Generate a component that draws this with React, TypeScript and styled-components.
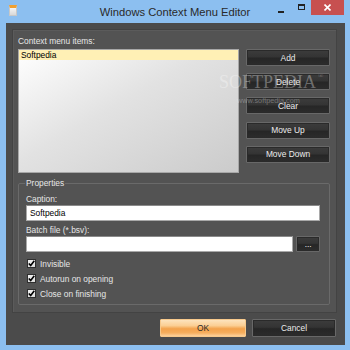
import React from 'react';
import styled, { createGlobalStyle } from 'styled-components';

const Global = createGlobalStyle`
  html, body { margin: 0; padding: 0; background: #8cbff0; }
  body { font-family: 'Liberation Sans', Arial, sans-serif; font-size: 8.4px; }
  * { box-sizing: border-box; }
`;

const Window = styled.div`
  position: relative;
  width: 350px;
  height: 350px;
  background: #8cbff0;
  display: flex;
  flex-direction: column;
  overflow: hidden;
`;

const TitleBar = styled.div`
  height: 23px;
  flex: none;
  display: grid;
  grid-template-columns: 1fr auto 1fr;
  align-items: start;
`;

const AppIcon = styled.div`
  margin: 5px 0 0 9px;
  width: 8px;
  height: 11px;
  background: linear-gradient(#f4f4f4, #d8d8d8);
  border: 1px solid #c8c8c8;
  border-top: 3px solid #f0a030;
`;

const Title = styled.div`
  padding-top: 6px;
  font-size: 11.2px;
  line-height: 13px;
  color: #2a2a2a;
  white-space: nowrap;
`;

const Controls = styled.div`
  justify-self: end;
  display: flex;
  margin-right: 6px;
`;

const CtrlButton = styled.div<{ $close?: boolean }>`
  width: ${(p) => (p.$close ? 33 : 20)}px;
  height: 15px;
  background: ${(p) => (p.$close ? '#c75050' : 'transparent')};
  display: flex;
  align-items: center;
  justify-content: center;
  color: #fff;
`;

const MinGlyph = styled.div`
  width: 6px;
  height: 2px;
  margin-top: 8px;
  background: #222;
`;

const MaxGlyph = styled.div`
  width: 7px;
  height: 6px;
  margin-top: -1px;
  border: 1px solid #222;
  border-top-width: 2px;
`;

const Client = styled.div`
  flex: 1;
  margin: 0 5px 5px 6px;
  background: #4b4b4b;
  padding: 6px 8px 8px 6px;
  display: flex;
  flex-direction: column;
`;

const Panel = styled.div`
  height: 284px;
  flex: none;
  background: #535353;
  border: 1px solid #434343;
  box-shadow: inset 1px 1px 0 #5b5b5b;
  padding: 6px 6px 0 5px;
  display: flex;
  flex-direction: column;
`;

const TopRow = styled.div`
  display: flex;
  gap: 7px;
`;

const ListColumn = styled.div`
  width: 221px;
  display: flex;
  flex-direction: column;
`;

const Label = styled.div<{ $gap?: number }>`
  color: #e6e6e6;
  line-height: 11px;
  height: 11px;
  margin-top: ${(p) => p.$gap ?? 0}px;
  white-space: nowrap;
`;

const ListBox = styled.div`
  margin-top: 2px;
  height: 124px;
  border: 1px solid #a8a8a8;
  background: linear-gradient(150deg, #ffffff 0%, #e2e2e2 45%, #cbcbcb 100%);
`;

const ListItem = styled.div<{ $selected?: boolean }>`
  height: 10px;
  line-height: 10px;
  padding-left: 2px;
  color: #000;
  background: ${(p) => (p.$selected ? '#fff0b5' : 'transparent')};
`;

const ButtonColumn = styled.div`
  padding-top: 13px;
  display: flex;
  flex-direction: column;
  gap: 7.2px;
`;

const DarkButton = styled.div<{ $w?: number; $h?: number }>`
  width: ${(p) => p.$w ?? 84}px;
  height: ${(p) => p.$h ?? 17}px;
  border: 1px solid #686868;
  border-radius: 1px;
  background: linear-gradient(#3c3c3c 0%, #343434 45%, #262626 55%, #2c2c2c 100%);
  box-shadow: inset 0 0 0 1px #2a2a2a;
  color: #ececec;
  display: flex;
  align-items: center;
  justify-content: center;
  line-height: 10px;
`;

const Group = styled.fieldset`
  margin: 5px 0 0 0;
  padding: 0 9px 3px 7px;
  border: 1px solid #6a6a6a;
  border-radius: 2px;
  display: flex;
  flex-direction: column;
  min-width: 0;
`;

const Legend = styled.legend`
  padding: 0 1px;
  margin-left: -1px;
  color: #e6e6e6;
  line-height: 11px;
  font-size: 8.4px;
`;

const TextInput = styled.div<{ $w?: number }>`
  height: 16px;
  width: ${(p) => (p.$w ? `${p.$w}px` : '100%')};
  background: #fff;
  border: 1px solid #a9a9a9;
  border-top-color: #8a8a8a;
  color: #000;
  line-height: 14px;
  padding-left: 3px;
`;

const FileRow = styled.div`
  display: flex;
  align-items: center;
  gap: 3px;
`;

const CheckRow = styled.div<{ $first?: boolean }>`
  height: 15px;
  display: flex;
  align-items: center;
  gap: 4px;
  margin-top: ${(p) => (p.$first ? 4 : 0)}px;
  padding-left: 1px;
  color: #e6e6e6;
`;

const Box = styled.div`
  width: 9px;
  height: 9px;
  background: linear-gradient(#f0f0f0, #dcdcdc);
  border: 1px solid #2e2e2e;
  display: flex;
  align-items: center;
  justify-content: center;
`;

const Footer = styled.div`
  margin-top: 6px;
  display: flex;
  justify-content: flex-end;
  gap: 6px;
  padding-right: 1px;
`;

const OkButton = styled.div`
  width: 86px;
  height: 18px;
  border: 1px solid #f7c98c;
  border-radius: 1px;
  background: linear-gradient(#fde3bd 0%, #fbcf94 35%, #f3a24c 55%, #f5ae5e 80%, #fcd09a 100%);
  color: #2a2a2a;
  display: flex;
  align-items: center;
  justify-content: center;
`;

const Watermark = styled.div`
  position: absolute;
  left: 219px;
  top: 72px;
  font-family: 'Liberation Serif', 'Times New Roman', serif;
  font-size: 18px;
  color: rgba(255, 255, 255, 0.32);
  pointer-events: none;
  white-space: nowrap;
`;

const WatermarkReg = styled.span`
  font-size: 7px;
  vertical-align: top;
  margin-left: 2px;
`;

const WatermarkUrl = styled.div`
  position: absolute;
  left: 237px;
  top: 96px;
  font-size: 7.3px;
  color: rgba(255, 255, 255, 0.3);
  pointer-events: none;
  white-space: nowrap;
`;

const Check = () => (
  <svg width="7" height="7" viewBox="0 0 7 7">
    <path d="M0.8 3.4 L2.7 5.6 L6.3 0.8" fill="none" stroke="#000" strokeWidth="1.6" />
  </svg>
);

export default function App() {
  return (
    <>
      <Global />
      <Window>
        <TitleBar>
          <AppIcon />
          <Title>Windows Context Menu Editor</Title>
          <Controls>
            <CtrlButton><MinGlyph /></CtrlButton>
            <CtrlButton><MaxGlyph /></CtrlButton>
            <CtrlButton $close>
              <svg width="7" height="7" viewBox="0 0 7 7">
                <path d="M0.5 0.5 L6.5 6.5 M6.5 0.5 L0.5 6.5" stroke="#fff" strokeWidth="1.6" />
              </svg>
            </CtrlButton>
          </Controls>
        </TitleBar>
        <Client>
          <Panel>
            <TopRow>
              <ListColumn>
                <Label>Context menu items:</Label>
                <ListBox>
                  <ListItem $selected>Softpedia</ListItem>
                </ListBox>
              </ListColumn>
              <ButtonColumn>
                <DarkButton>Add</DarkButton>
                <DarkButton>Delete</DarkButton>
                <DarkButton>Clear</DarkButton>
                <DarkButton>Move Up</DarkButton>
                <DarkButton>Move Down</DarkButton>
              </ButtonColumn>
            </TopRow>
            <Group>
              <Legend>Properties</Legend>
              <Label $gap={5}>Caption:</Label>
              <TextInput>Softpedia</TextInput>
              <Label $gap={4}>Batch file (*.bsv):</Label>
              <FileRow>
                <TextInput $w={271} />
                <DarkButton $w={24} $h={16}>...</DarkButton>
              </FileRow>
              <CheckRow $first><Box><Check /></Box>Invisible</CheckRow>
              <CheckRow><Box><Check /></Box>Autorun on opening</CheckRow>
              <CheckRow><Box><Check /></Box>Close on finishing</CheckRow>
            </Group>
          </Panel>
          <Footer>
            <OkButton>OK</OkButton>
            <DarkButton $w={84} $h={18}>Cancel</DarkButton>
          </Footer>
        </Client>
        <Watermark>SOFTPEDIA<WatermarkReg>®</WatermarkReg></Watermark>
        <WatermarkUrl>www.softpedia.com</WatermarkUrl>
      </Window>
    </>
  );
}
